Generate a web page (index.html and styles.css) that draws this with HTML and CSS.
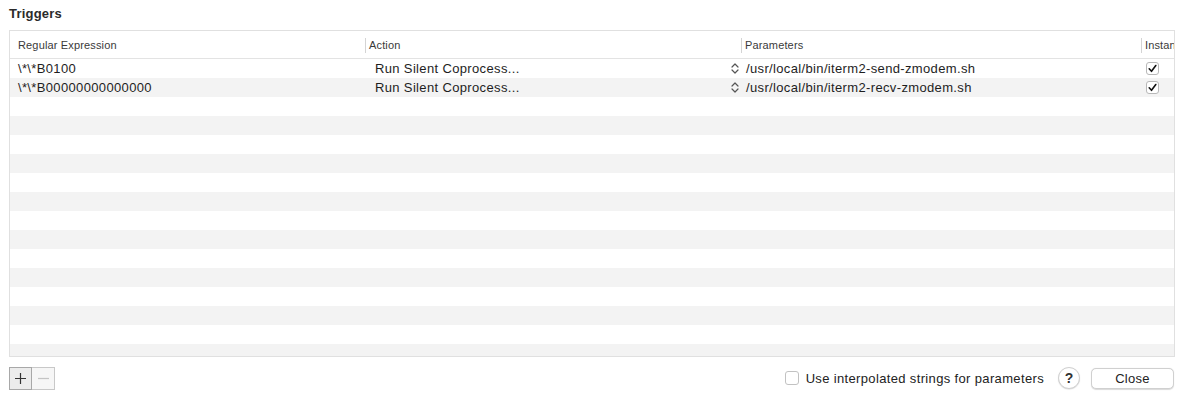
FILE: index.html
```html
<!DOCTYPE html>
<html>
<head>
<meta charset="utf-8">
<link rel="stylesheet" href="styles.css">
</head>
<body>
<div class="panel">
  <div class="title">Triggers</div>
  <div class="table">
    <div class="head">
      <div class="hc c1">Regular Expression</div>
      <div class="hc c2 sep">Action</div>
      <div class="hc c3 sep">Parameters</div>
      <div class="hc c4 sep">Instant</div>
    </div>
    <div class="rows">
      <div class="row">
        <div class="cell c1">\*\*B0100</div>
        <div class="cell c2 act"><span>Run Silent Coprocess...</span>
          <svg class="chev" width="8" height="11" viewBox="0 0 8 11"><path d="M1 4 L4 1 L7 4 M1 7 L4 10 L7 7" fill="none" stroke="#555" stroke-width="1.2" stroke-linecap="round" stroke-linejoin="round"/></svg></div>
        <div class="cell c3">/usr/local/bin/iterm2-send-zmodem.sh</div>
        <div class="cell c4"><span class="cb on"><svg width="9" height="9" viewBox="0 0 9 9"><path d="M1.2 4.8 L3.5 7.3 L7.8 1.5" fill="none" stroke="#111" stroke-width="1.6" stroke-linecap="round" stroke-linejoin="round"/></svg></span></div>
      </div>
      <div class="row">
        <div class="cell c1">\*\*B00000000000000</div>
        <div class="cell c2 act"><span>Run Silent Coprocess...</span>
          <svg class="chev" width="8" height="11" viewBox="0 0 8 11"><path d="M1 4 L4 1 L7 4 M1 7 L4 10 L7 7" fill="none" stroke="#555" stroke-width="1.2" stroke-linecap="round" stroke-linejoin="round"/></svg></div>
        <div class="cell c3">/usr/local/bin/iterm2-recv-zmodem.sh</div>
        <div class="cell c4"><span class="cb on"><svg width="9" height="9" viewBox="0 0 9 9"><path d="M1.2 4.8 L3.5 7.3 L7.8 1.5" fill="none" stroke="#111" stroke-width="1.6" stroke-linecap="round" stroke-linejoin="round"/></svg></span></div>
      </div>
      <div class="row"></div><div class="row"></div><div class="row"></div><div class="row"></div>
      <div class="row"></div><div class="row"></div><div class="row"></div><div class="row"></div>
      <div class="row"></div><div class="row"></div><div class="row"></div><div class="row"></div>
      <div class="row"></div><div class="row"></div>
    </div>
  </div>
  <div class="footer">
    <div class="seg">
      <button class="sbtn plus" aria-label="Add"><svg width="13" height="13" viewBox="0 0 13 13"><path d="M6.5 1 V12 M1 6.5 H12" stroke="#333" stroke-width="1.2"/></svg></button><button class="sbtn minus" aria-label="Remove"><svg width="13" height="13" viewBox="0 0 13 13"><path d="M1 6.5 H12" stroke="#c4c4c4" stroke-width="1.2"/></svg></button>
    </div>
    <label class="opt"><span class="cb"></span>Use interpolated strings for parameters</label>
    <button class="help">?</button>
    <button class="close">Close</button>
  </div>
</div>
</body>
</html>
```

FILE: styles.css
```css
* { box-sizing: border-box; }
html, body { margin: 0; padding: 0; background: #ffffff; }
body {
  font-family: "Liberation Sans", Arial, sans-serif;
  color: #222;
  width: 1188px;
  height: 403px;
  overflow: hidden;
}
.panel { padding: 6px 14px 0 9px; }
.title {
  font-size: 13px;
  font-weight: bold;
  color: #2a2a2a;
  height: 24px;
  line-height: 15px;
  letter-spacing: 0.2px;
}
.table {
  width: 1166px;
  height: 327px;
  border: 1px solid #e0e0e0;
  overflow: hidden;
  background: #fff;
}
.head {
  display: flex;
  height: 28px;
  border-bottom: 1px solid #e3e3e3;
  font-size: 11px;
  color: #3a3a3a;
  align-items: center;
  white-space: nowrap;
  letter-spacing: 0.15px;
}
.c1 { width: 355px; flex: none; }
.c2 { width: 376px; flex: none; }
.c3 { width: 400px; flex: none; }
.c4 { width: 33px; flex: none; overflow: hidden; }
.hc { padding-left: 8px; position: relative; height: 28px; line-height: 29px; }
.hc.c2, .hc.c3, .hc.c4 { padding-left: 4px; }
.sep::before {
  content: "";
  position: absolute;
  left: 0; top: 7px;
  width: 1px; height: 15px;
  background: #d4d4d4;
}
.rows .row {
  display: flex;
  height: 19px;
  align-items: center;
  font-size: 13px;
  color: #1e1e1e;
  white-space: nowrap;
  letter-spacing: 0.35px;
}
.rows .row:nth-child(even) { background: #f3f3f3; }
.cell.c1 { padding-left: 8px; }
.cell.act {
  display: flex;
  align-items: center;
  justify-content: space-between;
  padding-left: 10px;
  padding-right: 2px;
}
.cell.c3 { padding-left: 5px; }
.cell.c4 { padding-left: 5px; display: flex; align-items: center; }
.cb {
  display: inline-flex;
  align-items: center;
  justify-content: center;
  width: 13px; height: 13px;
  border: 1px solid #b8b8b8;
  border-radius: 3px;
  background: #fff;
  flex: none;
}
.footer {
  display: flex;
  align-items: center;
  height: 42px;
  padding-top: 0;
}
.seg { display: flex; margin-right: auto; }
.sbtn {
  width: 23px; height: 23px;
  padding: 0;
  border: 1px solid #c8c8c8;
  background: #f2f2f2;
  display: flex;
  align-items: center;
  justify-content: center;
}
.sbtn.plus { border-color: #a8a8a8; background: #ececec; }
.sbtn.minus { border-left: none; background: #f6f6f6; }
.opt {
  display: flex;
  align-items: center;
  font-size: 13px;
  color: #222;
  letter-spacing: 0.35px;
}
.opt .cb { margin-right: 7px; border-color: #c2c2c2; width: 14px; height: 14px; }
.help {
  margin-left: 14px;
  width: 22px; height: 22px;
  border-radius: 50%;
  border: 1px solid #d0d0d0;
  background: #fff;
  font-family: "Liberation Sans", Arial, sans-serif;
  font-size: 14px;
  font-weight: bold;
  color: #333;
  padding: 0;
  box-shadow: 0 0.5px 1px rgba(0,0,0,0.15);
}
.close {
  margin-left: 11px;
  width: 83px; height: 21px;
  border-radius: 5px;
  border: 1px solid #d0d0d0;
  background: #fff;
  font-family: "Liberation Sans", Arial, sans-serif;
  font-size: 13px;
  color: #222;
  padding: 0;
  letter-spacing: 0.3px;
  box-shadow: 0 0.5px 1px rgba(0,0,0,0.15);
}
```
